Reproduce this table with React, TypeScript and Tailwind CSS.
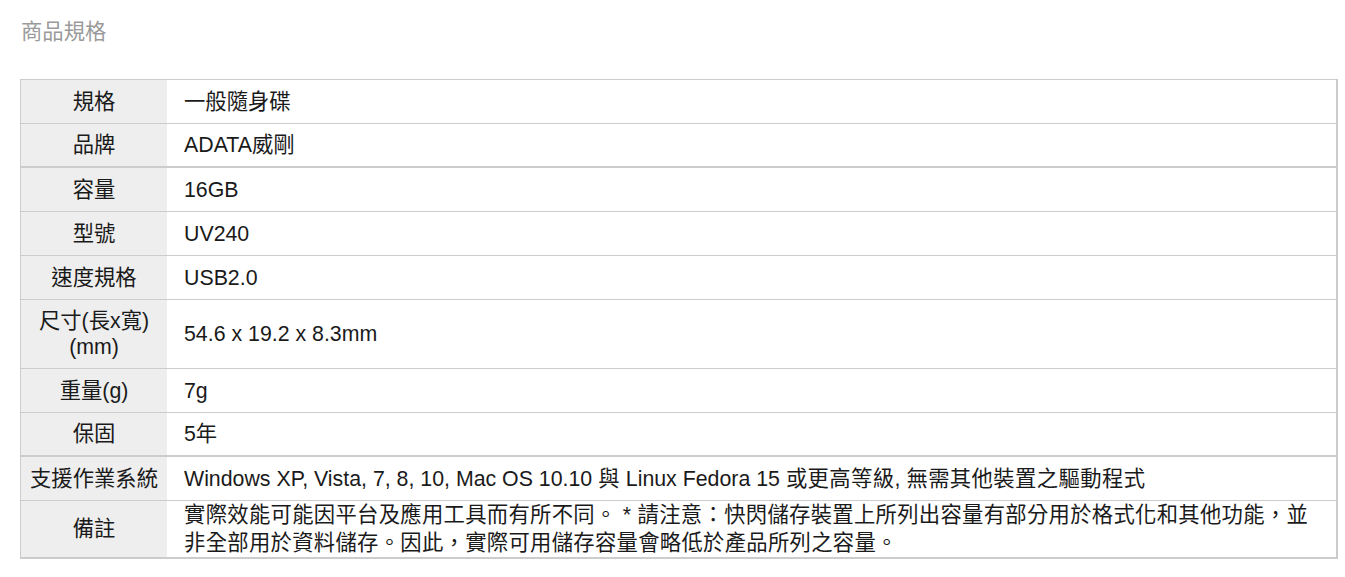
import React from "react";

type Row = { label: React.ReactNode; value: React.ReactNode; h: string; thick?: boolean };

const rows: Row[] = [
  { label: "規格", value: "一般隨身碟", h: "h-[44px]" },
  { label: "品牌", value: "ADATA威剛", h: "h-[44px]", thick: true },
  { label: "容量", value: "16GB", h: "h-[44px]" },
  { label: "型號", value: "UV240", h: "h-[44px]" },
  { label: "速度規格", value: "USB2.0", h: "h-[44px]" },
  {
    label: (
      <div className="leading-[26px]">
        尺寸(長x寬)
        <br />
        (mm)
      </div>
    ),
    value: "54.6 x 19.2 x 8.3mm",
    h: "h-[69px]",
  },
  { label: "重量(g)", value: "7g", h: "h-[44px]" },
  { label: "保固", value: "5年", h: "h-[44px]", thick: true },
  {
    label: "支援作業系統",
    value: (
      <span>
        Windows XP, Vista, 7, 8, 10, Mac OS 10.10 <span className="tracking-[0.4px]">與</span> Linux Fedora 15{" "}
        <span className="tracking-[0.4px]">或更高等級</span>, <span className="tracking-[0.4px]">無需其他裝置之驅動程式</span>
      </span>
    ),
    h: "h-[44px]",
  },
  {
    label: "備註",
    value: (
      <div className="leading-[28px] tracking-[0.3px]">
        實際效能可能因平台及應用工具而有所不同。 * 請注意：快閃儲存裝置上所列出容量有部分用於格式化和其他功能，並
        <br />
        非全部用於資料儲存。因此，實際可用儲存容量會略低於產品所列之容量。
      </div>
    ),
    h: "h-[56px]",
  },
];

export default function App() {
  return (
    <div
      className="w-[1345px] h-[577px] bg-white overflow-hidden text-[21.33px] text-[#1a1a1a]"
      style={{ fontFamily: '"Liberation Sans", Arial, "Noto Sans CJK TC", sans-serif' }}
    >
      <div className="pl-[21px] pt-[18px] h-[79px] text-[#9a9a9a] leading-[28px]">商品規格</div>
      <div className="ml-[20px] w-[1318px] border-t border-l border-[#cccccc] border-r-2 border-b-2">
        {rows.map((r, i) => (
          <div
            key={i}
            className={`flex ${r.h} ${i < rows.length - 1 ? (r.thick ? "border-b-2" : "border-b") : ""} border-[#cccccc]`}
          >
            <div className="w-[146px] shrink-0 bg-[#eeeeee] flex items-center justify-center text-center leading-[28px]">
              {r.label}
            </div>
            <div className="flex-1 flex items-center pl-[17px] leading-[28px] whitespace-nowrap">{r.value}</div>
          </div>
        ))}
      </div>
    </div>
  );
}
